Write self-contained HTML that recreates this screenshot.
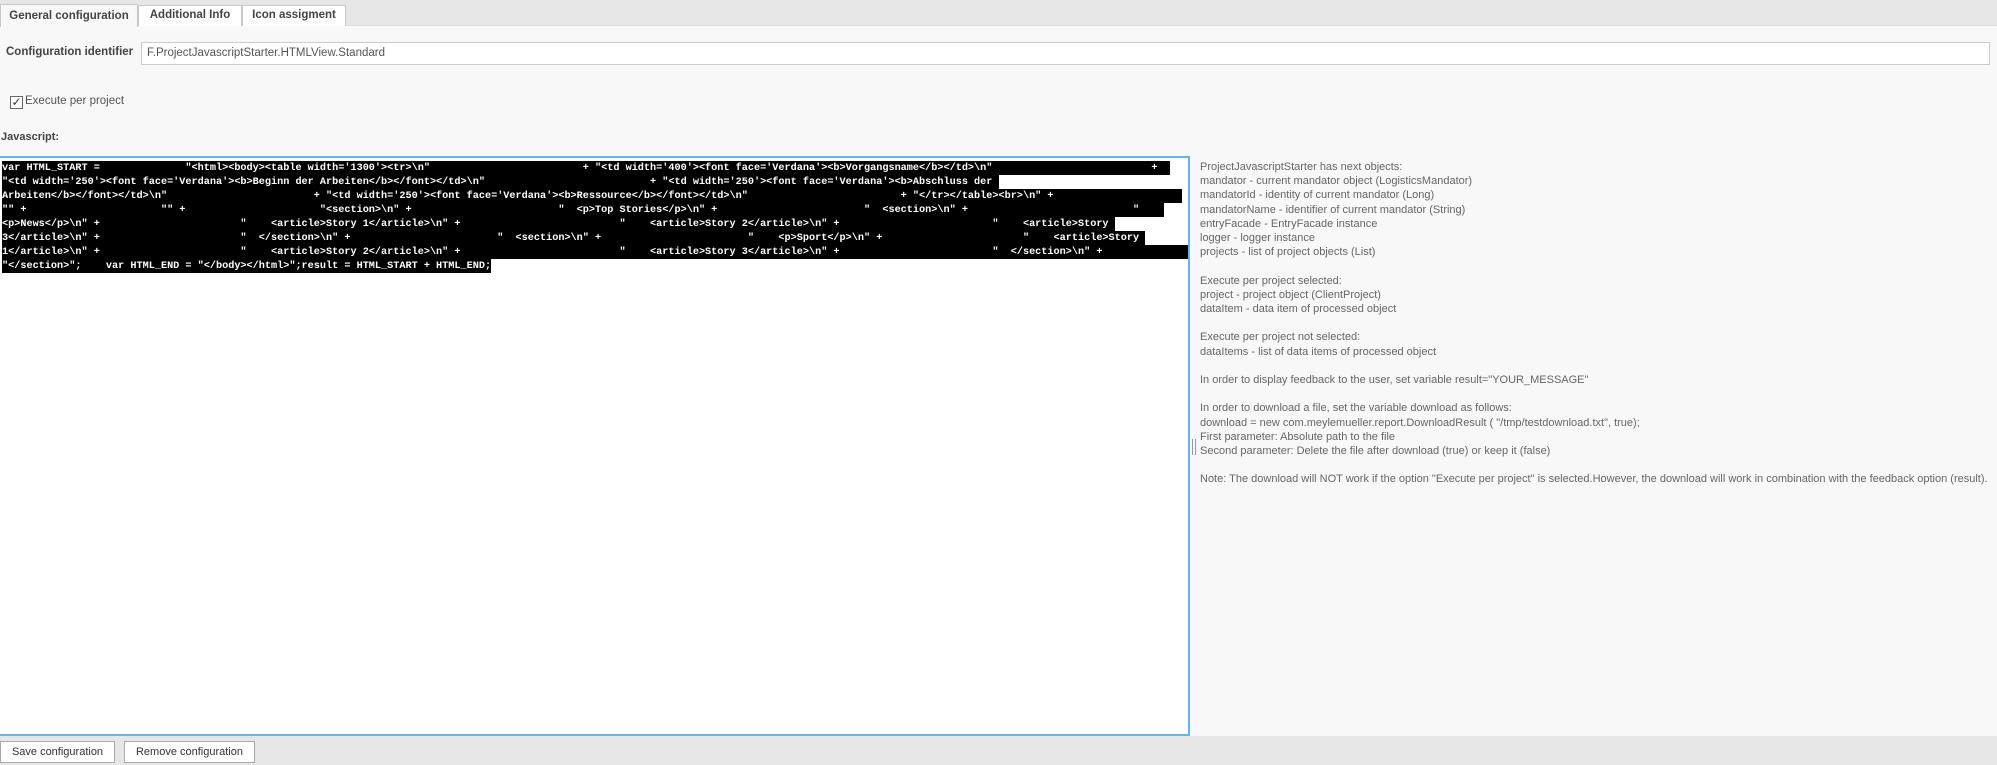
<!DOCTYPE html>
<html><head><meta charset="utf-8"><style>
*{margin:0;padding:0;box-sizing:border-box}
body{width:1997px;height:765px;background:#f8f8f8;font-family:"Liberation Sans",Arial,sans-serif;position:relative;overflow:hidden;color:#333}
.bar{position:absolute;left:0;top:0;width:1997px;height:26px;background:#e6e6e6;border-bottom:1px solid #ddd}
.tab{position:absolute;top:5px;height:21px;border:1px solid #c8c8c8;border-bottom:none;background:#fff;font-size:11.5px;font-weight:bold;color:#444;text-align:center;line-height:19px}
.lbl{position:absolute;font-size:11.5px;font-weight:bold;color:#444}
.inp{position:absolute;left:141px;top:42px;width:1849px;height:23px;background:#fff;border:1px solid #ccc;font-size:11.5px;color:#555;padding-left:5px;line-height:21px}
.cb{position:absolute;left:10px;top:96px;width:13px;height:13px;border:1px solid #666;background:#fff;font-size:12px;line-height:11px;text-align:center;color:#333}
.ed{position:absolute;left:0;top:156px;width:1190px;height:580px;background:#fff;border:2px solid #62b6ee;border-left:none;padding-top:4px;padding-left:2px}
.ln{font-family:"Liberation Mono",monospace;font-size:10.2px;font-weight:bold;line-height:14px;height:14px;white-space:pre;color:#fff}
.ln span{background:#000;padding:2px 0 1px}
.info{position:absolute;left:1200px;top:160px;font-size:11px;line-height:14.2px;color:#666;white-space:pre}
.bot{position:absolute;left:0;top:736px;width:1997px;height:29px;background:#e6e6e6}
.btn{position:absolute;top:5px;height:22px;border:1px solid #aaa;background:#fff;font-size:11px;color:#333;text-align:center;line-height:20px}
</style></head><body>
<div class="bar"></div>
<div class="tab" style="left:0;width:138px;top:4px;height:23px;line-height:22px;background:#f8f8f8">General configuration</div>
<div class="tab" style="left:138px;width:104px">Additional Info</div>
<div class="tab" style="left:242px;width:104px">Icon assigment</div>
<div class="lbl" style="left:6px;top:46px">Configuration identifier</div>
<div class="inp">F.ProjectJavascriptStarter.HTMLView.Standard</div>
<div class="cb">✓</div>
<div style="position:absolute;left:25px;top:95px;font-size:11.5px;color:#555">Execute per project</div>
<div class="lbl" style="left:1px;top:131px;font-size:11px">Javascript:</div>
<div class="ed">
<div class="ln"><span>var HTML_START =              "&lt;html&gt;&lt;body&gt;&lt;table width='1300'&gt;&lt;tr&gt;\n"                         + "&lt;td width='400'&gt;&lt;font face='Verdana'&gt;&lt;b&gt;Vorgangsname&lt;/b&gt;&lt;/td&gt;\n"                          +  </span></div>
<div class="ln"><span>"&lt;td width='250'&gt;&lt;font face='Verdana'&gt;&lt;b&gt;Beginn der Arbeiten&lt;/b&gt;&lt;/font&gt;&lt;/td&gt;\n"                           + "&lt;td width='250'&gt;&lt;font face='Verdana'&gt;&lt;b&gt;Abschluss der </span></div>
<div class="ln"><span>Arbeiten&lt;/b&gt;&lt;/font&gt;&lt;/td&gt;\n"                        + "&lt;td width='250'&gt;&lt;font face='Verdana'&gt;&lt;b&gt;Ressource&lt;/b&gt;&lt;/font&gt;&lt;/td&gt;\n"                         + "&lt;/tr&gt;&lt;/table&gt;&lt;br&gt;\n" +                     </span></div>
<div class="ln"><span>"" +                      "" +                      "&lt;section&gt;\n" +                        "  &lt;p&gt;Top Stories&lt;/p&gt;\n" +                        "  &lt;section&gt;\n" +                           "    </span></div>
<div class="ln"><span>&lt;p&gt;News&lt;/p&gt;\n" +                       "    &lt;article&gt;Story 1&lt;/article&gt;\n" +                          "    &lt;article&gt;Story 2&lt;/article&gt;\n" +                         "    &lt;article&gt;Story </span></div>
<div class="ln"><span>3&lt;/article&gt;\n" +                       "  &lt;/section&gt;\n" +                        "  &lt;section&gt;\n" +                        "    &lt;p&gt;Sport&lt;/p&gt;\n" +                       "    &lt;article&gt;Story </span></div>
<div class="ln"><span>1&lt;/article&gt;\n" +                       "    &lt;article&gt;Story 2&lt;/article&gt;\n" +                          "    &lt;article&gt;Story 3&lt;/article&gt;\n" +                         "  &lt;/section&gt;\n" +              </span></div>
<div class="ln"><span>"&lt;/section&gt;";    var HTML_END = "&lt;/body&gt;&lt;/html&gt;";result = HTML_START + HTML_END;</span></div>
</div>
<div style="position:absolute;left:1192px;top:439px;width:4px;height:16px;border-left:1px solid #999;border-right:1px solid #999"></div>
<div class="info">ProjectJavascriptStarter has next objects:
mandator - current mandator object (LogisticsMandator)
mandatorId - identity of current mandator (Long)
mandatorName - identifier of current mandator (String)
entryFacade - EntryFacade instance
logger - logger instance
projects - list of project objects (List)

Execute per project selected:
project - project object (ClientProject)
dataItem - data item of processed object

Execute per project not selected:
dataItems - list of data items of processed object

In order to display feedback to the user, set variable result="YOUR_MESSAGE"

In order to download a file, set the variable download as follows:
download = new com.meylemueller.report.DownloadResult ( "/tmp/testdownload.txt", true);
First parameter: Absolute path to the file
Second parameter: Delete the file after download (true) or keep it (false)

Note: The download will NOT work if the option "Execute per project" is selected.However, the download will work in combination with the feedback option (result).</div>
<div class="bot">
<div class="btn" style="left:0;width:115px">Save configuration</div>
<div class="btn" style="left:124px;width:131px">Remove configuration</div>
</div>
</body></html>
